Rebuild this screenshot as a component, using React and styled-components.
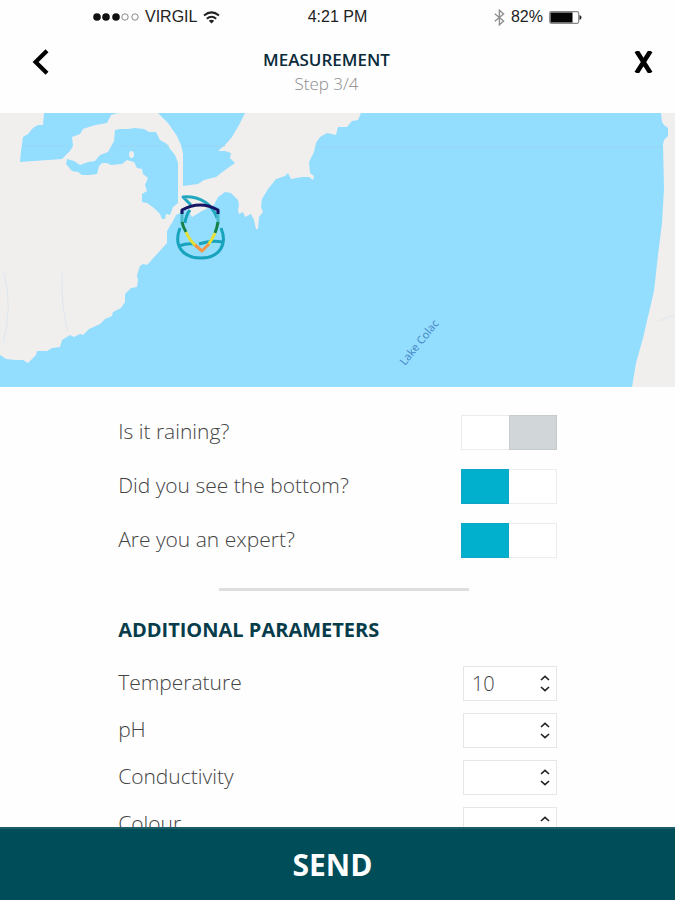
import React, { useRef, useState } from "react";
import styled, { createGlobalStyle } from "styled-components";

const GlobalStyle = createGlobalStyle`
  *, *::before, *::after { box-sizing: border-box; }
  body {
    margin: 0;
    background: #fefefe;
    color: #555;
    font-family: "Open Sans", "Noto Sans", sans-serif;
  }
  button, input { font-family: inherit; }
`;

const Screen = styled.div`
  display: flex;
  flex-direction: column;
  height: 100vh;
  overflow: hidden;
`;

const StatusBar = styled.div`
  display: grid;
  grid-template-columns: 1fr auto 1fr;
  align-items: center;
  flex: none;
  height: 34px;
  padding: 0 93px;
  color: #222;
  font: 16px "Liberation Sans", sans-serif;
`;

const StatusGroup = styled.div`
  display: flex;
  align-items: center;
  justify-content: ${(p) => (p.$end ? "flex-end" : "flex-start")};
  gap: 6px;
  white-space: nowrap;
`;

const Header = styled.header`
  display: grid;
  grid-template-columns: 1fr auto 1fr;
  align-items: center;
  flex: none;
  height: 79px;
  padding: 0 22px 4px 0;
`;

const Heading = styled.div`
  text-align: center;
`;

const Title = styled.h1`
  margin: 0;
  color: #0b2a3a;
  font-size: 17px;
  font-weight: 600;
  line-height: 24px;
`;

const Step = styled.p`
  margin: 0;
  color: #8c8c8c;
  font-size: 17px;
  font-weight: 300;
  line-height: 24px;
`;

const IconButton = styled.button`
  display: flex;
  justify-self: ${(p) => (p.$end ? "end" : "start")};
  margin: 0 0 20px ${(p) => (p.$end ? "0" : "32px")};
  padding: 0;
  border: 0;
  background: none;
  color: #000;
  cursor: pointer;
`;

const MapView = styled.svg`
  display: block;
  flex: none;
  width: 100%;
  height: 274px;
`;

const MapLabel = styled.text`
  fill: #4384c4;
  font-size: 11px;
`;

const Form = styled.form`
  flex: 1;
  min-height: 0;
  overflow: hidden;
`;

const FormBody = styled.div`
  width: 65%;
  margin: 0 auto;
  padding-top: 28px;
`;

const Rows = styled.div`
  display: flex;
  flex-direction: column;
  gap: ${(p) => p.$gap}px;
`;

const Row = styled.div`
  display: flex;
  align-items: center;
  justify-content: space-between;
  height: 35px;
`;

const Label = styled.label`
  padding-bottom: 4px;
  color: #444;
  font-size: 21px;
  font-weight: 300;
  line-height: 28px;
`;

const Toggle = styled.input`
  appearance: none;
  display: flex;
  width: 96px;
  height: 35px;
  margin: 0;
  border: 1px solid #ececec;
  background: #fff;
  cursor: pointer;

  &::before {
    content: "";
    width: 48px;
    margin: -1px -1px -1px auto;
    border: 1px solid #c6cccd;
    background: #d1d6d8;
  }

  &:checked::before {
    margin: -1px auto -1px -1px;
    border-color: #10a5c4;
    background: #00b0cd;
  }
`;

const Divider = styled.hr`
  width: 57%;
  height: 3px;
  margin: 30px 0 0 23%;
  border: 0;
  background: #dedede;
`;

const SectionTitle = styled.h2`
  margin: 25px 0 22px;
  color: #073c4b;
  font-size: 20px;
  font-weight: 700;
  line-height: 28px;
`;

const NumberBox = styled.div`
  display: flex;
  width: 94px;
  height: 35px;
  border: 1px solid #e6e6e6;
  background: #fff;
`;

const NumberInput = styled.input`
  appearance: textfield;
  flex: 1;
  min-width: 0;
  padding: 0 0 0 8px;
  border: 0;
  outline: 0;
  background: none;
  color: #444;
  font-size: 20px;
  font-weight: 300;

  &::-webkit-inner-spin-button,
  &::-webkit-outer-spin-button {
    appearance: none;
    margin: 0;
  }
`;

const Stepper = styled.div`
  display: flex;
  flex-direction: column;
  justify-content: center;
  gap: 5px;
  margin-right: 6px;
`;

const StepButton = styled.button`
  display: flex;
  padding: 0;
  border: 0;
  background: none;
  color: #222;
  cursor: pointer;
`;

const SendBar = styled.footer`
  flex: none;
  height: 73px;
`;

const SendButton = styled.button`
  width: 100%;
  height: 100%;
  padding: 0 10px 0 0;
  border: 0;
  border-top: 2px solid #1d5d68;
  background: #004d5a;
  color: #fff;
  font-size: 30px;
  font-weight: 700;
  cursor: pointer;
`;

const Signal = () => (
  <svg width="46" height="8" viewBox="0 0 46 8" aria-hidden="true">
    {[4, 13, 23].map((x) => (
      <circle key={x} cx={x} cy="4" r="3.8" fill="#111" />
    ))}
    {[32, 42].map((x) => (
      <circle key={x} cx={x} cy="4" r="3.2" fill="none" stroke="#888" />
    ))}
  </svg>
);

const Wifi = () => (
  <svg width="17" height="13" viewBox="0 0 17 13" fill="none" stroke="#222" strokeWidth="2" aria-hidden="true">
    <path d="M1 4.6Q8.5-1.8 16 4.6" />
    <path d="M3.8 7.8Q8.5 3.8 13.2 7.8" />
    <path d="M8.5 12.5 5.8 9.8Q8.5 7.8 11.2 9.8Z" fill="#222" stroke="none" />
  </svg>
);

const Bluetooth = () => (
  <svg width="11" height="17" viewBox="0 0 11 17" fill="none" stroke="#909090" strokeWidth="1.4" aria-hidden="true">
    <path d="M.8 4.7 9.6 12 5.4 15.8V1.2L9.6 5 .8 12.3" />
  </svg>
);

const Battery = () => (
  <svg width="33" height="13" viewBox="0 0 33 13" aria-hidden="true">
    <rect x=".7" y=".7" width="29" height="11.6" rx="1.5" fill="#fff" stroke="#888" strokeWidth="1.2" />
    <rect x="1.5" y="1.5" width="22" height="10" fill="#050505" />
    <path d="M30.5 4v5q2-.8 2-2.5T30.5 4Z" fill="#222" />
  </svg>
);

const Back = () => (
  <svg width="17" height="26" viewBox="0 0 17 26" fill="none" stroke="currentColor" strokeWidth="4.2" aria-hidden="true">
    <path d="M15 1.8 3.6 13 15 24.2" />
  </svg>
);

const Close = () => (
  <svg width="19" height="22" viewBox="0 0 19 22" fill="none" stroke="currentColor" strokeWidth="4.6" aria-hidden="true">
    <path d="M2.5 0 16.5 22M16.5 0 2.5 22" />
  </svg>
);

const Chevron = ({ down }) => (
  <svg width="10" height="6" viewBox="0 0 10 6" fill="none" stroke="currentColor" strokeWidth="1.6" aria-hidden="true">
    <path d={down ? "M1 1 5 4.7 9 1" : "M1 5 5 1.3 9 5"} />
  </svg>
);

const LakeMap = () => (
  <MapView viewBox="0 0 675 274" preserveAspectRatio="xMidYMid slice" role="img" aria-label="Map of Lake Colac">
    <rect width="675" height="274" fill="#f0efed" />
    <g fill="#93ddff">
      <path d="M44 0 43 12 38 12 33 15 28 21 23 24 21 38 20 49 62 46 70 38 73 33 72 24 80 21 83 16 92 13 96 12 107 10 111 2 118 0Z" />
      <path d="M67 46 74 48 80 52 88 49 95 48 100 42 108 39 114 28 115 17 120 16 128 16 135 15 144 16 149 19 156 19 160 27 167 31 170 36 175 42 178 50 178 90 173 94 170 102 166 101 165 106 162 106 160 101 154 95 147 90 142 89 142 81 147 78 145 72 148 65 143 61 142 56 137 55 134 49 127 47 122 51 111 52 107 50 102 50 99 53 97 61 90 62 82 62 78 59 72 58 66 51Z" />
      <path d="M158 0 168 10 177 23 181 32 183 40 183 73 198 71 204 67 216 64 225 57 235 50 230 45 231 40 225 38 218 38 225 32 232 24 239 12 245 0Z" />
      <path d="M0 242 6 246 16 247 23 247 28 250 36 242 37 238 47 238 52 235 60 234 62 227 70 222 74 224 80 221 83 222 89 216 100 211 105 206 112 203 113 199 121 195 125 189 125 181 131 175 137 174 138 167 137 162 140 153 143 151 147 152 158 140 167 130 167 118 173 108 176 102 182 99 187 96 192 104 202 98 214 92 218 84 225 79 231 80 238 87 239 92 238 97 239 101 243 99 245 104 251 101 254 107 256 116 258 116 259 104 263 99 261 94 262 86 268 76 276 66 285 63 288 60 291 66 302 64 309 64 313 67 314 63 310 60 309 49 314 39 316 30 320 24 327 20 336 22 338 14 347 14 352 8 358 7 361 0H661L662 9 664 12 668 15 668 23 664 27 663 31 664 75 662 110 658 142 654 178 643 225 636 250 632 274H0Z" />
    </g>
    <ellipse cx="131.500" cy="41.500" rx="2.500" ry="3.500" fill="#f0efed" />
    <g fill="none" stroke="#dfe6ed">
      <path d="M4 160Q13 194 3 230M62 160Q61 194 68 219M660 208 667 205 675 202" />
    </g>
    <path d="M23 33H69M115 33H169M184 33H225M316 34H663" stroke="#9ad5f3" />
    <MapLabel x="405" y="253" transform="rotate(-51 405 253)">Lake Colac</MapLabel>
    <g fill="none" strokeWidth="3" strokeLinejoin="round">
      <path d="M191 92 183 84Q195 83 205 89Q213 94 217 105" stroke="#22a8be" />
      <path d="M190 97Q186 102 185 110M180 115C173 133 183 145 201 145C219 145 228 132 221 115M179 133Q187 130 194 131M199 131Q211 127 222 129" stroke="#18a3bc" />
      <path d="M182 98V110M218 98V110" stroke="#48bccb" />
      <path d="M182 101V97Q200 87 218 97V101" stroke="#171565" />
      <path d="M182 109Q183 114 186 119M218 109Q217 115 215 120" stroke="#168144" />
      <path d="M186 119Q190 128 196 133M215 120Q212 127 208 132" stroke="#e6df33" />
      <path d="M195 132 202 138 209 131" stroke="#f49543" />
    </g>
  </MapView>
);

const ToggleRow = ({ id, label, on }) => (
  <Row>
    <Label htmlFor={id}>{label}</Label>
    <Toggle id={id} type="checkbox" role="switch" defaultChecked={on} />
  </Row>
);

const NumberRow = ({ id, label, initial = "" }) => {
  const [value, setValue] = useState(initial);
  const input = useRef(null);
  const step = (amount) => {
    setValue(String(Number(value) + amount));
    input.current.focus();
  };
  return (
    <Row>
      <Label htmlFor={id}>{label}</Label>
      <NumberBox>
        <NumberInput id={id} ref={input} type="number" value={value} onChange={(e) => setValue(e.target.value)} />
        <Stepper>
          <StepButton type="button" aria-label={`Increase ${label}`} onClick={() => step(1)}>
            <Chevron />
          </StepButton>
          <StepButton type="button" aria-label={`Decrease ${label}`} onClick={() => step(-1)}>
            <Chevron down />
          </StepButton>
        </Stepper>
      </NumberBox>
    </Row>
  );
};

export default function App() {
  return (
    <Screen>
      <GlobalStyle />
      <StatusBar>
        <StatusGroup>
          <Signal />
          <span>VIRGIL</span>
          <Wifi />
        </StatusGroup>
        <span>4:21 PM</span>
        <StatusGroup $end>
          <Bluetooth />
          <span>82%</span>
          <Battery />
        </StatusGroup>
      </StatusBar>
      <Header>
        <IconButton type="button" aria-label="Back">
          <Back />
        </IconButton>
        <Heading>
          <Title>MEASUREMENT</Title>
          <Step>Step 3/4</Step>
        </Heading>
        <IconButton type="button" aria-label="Close" $end>
          <Close />
        </IconButton>
      </Header>
      <LakeMap />
      <Form id="measurement" onSubmit={(e) => e.preventDefault()}>
        <FormBody>
          <Rows $gap={19}>
            <ToggleRow id="raining" label="Is it raining?" />
            <ToggleRow id="bottom" label="Did you see the bottom?" on />
            <ToggleRow id="expert" label="Are you an expert?" on />
          </Rows>
          <Divider />
          <SectionTitle>ADDITIONAL PARAMETERS</SectionTitle>
          <Rows $gap={12}>
            <NumberRow id="temperature" label="Temperature" initial="10" />
            <NumberRow id="ph" label="pH" />
            <NumberRow id="conductivity" label="Conductivity" />
            <NumberRow id="colour" label="Colour" />
          </Rows>
        </FormBody>
      </Form>
      <SendBar>
        <SendButton type="submit" form="measurement">SEND</SendButton>
      </SendBar>
    </Screen>
  );
}
